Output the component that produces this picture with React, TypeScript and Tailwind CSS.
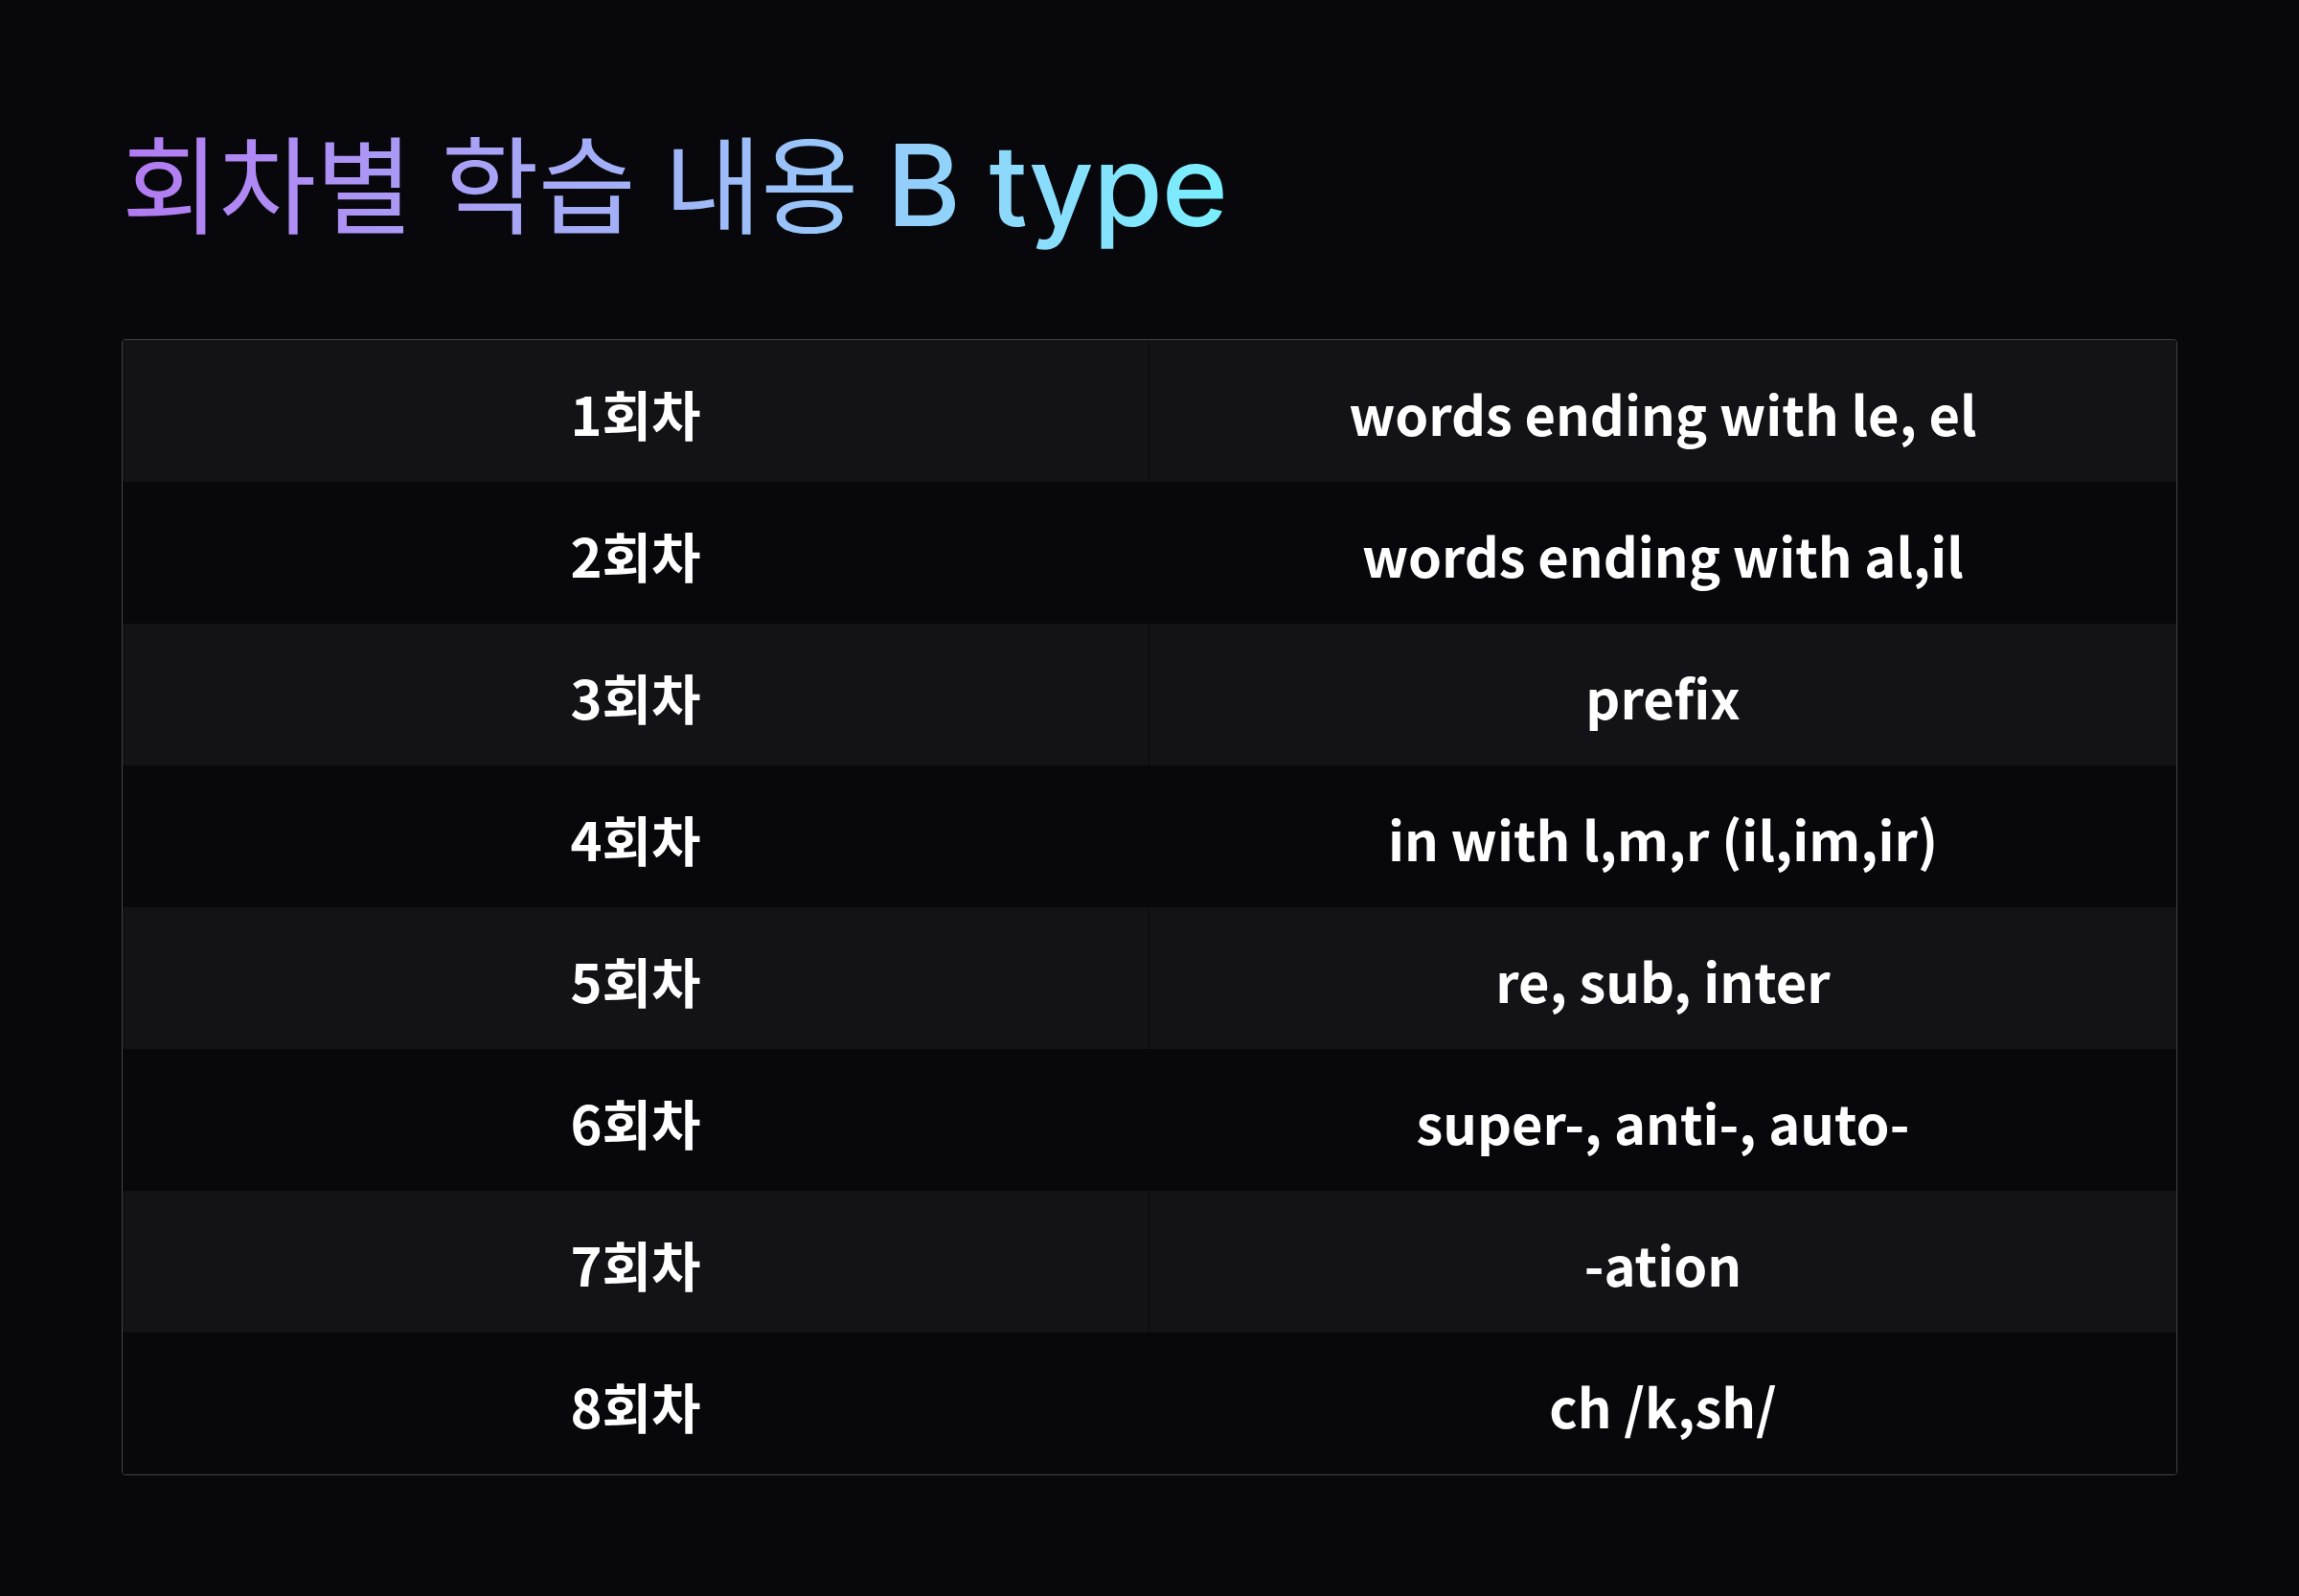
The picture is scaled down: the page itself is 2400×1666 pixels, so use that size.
import React from "react";

const rows = [
  ["1회차", "words ending with le, el"],
  ["2회차", "words ending with al,il"],
  ["3회차", "prefix"],
  ["4회차", "in with l,m,r (il,im,ir)"],
  ["5회차", "re, sub, inter"],
  ["6회차", "super-, anti-, auto-"],
  ["7회차", "-ation"],
  ["8회차", "ch /k,sh/"],
];

export default function App() {
  return (
    <div className="min-h-[1666px] w-full bg-[#08080c] px-[127px] pt-[118px]">
      <h1
        className="flex h-[150px] items-baseline"
        style={{ fontFamily: '"Inter", "Noto Sans CJK KR", sans-serif' }}
      >
        <span className="whitespace-pre bg-gradient-to-r from-[#b27af2] via-[#a0b6f8] to-[#78effd] bg-clip-text leading-[150px] text-transparent">
          <span className="text-[111px] font-normal tracking-[-1px]">회차별 학습 내용 </span>
          <span className="text-[118px] font-medium tracking-[-1px]">B type</span>
        </span>
      </h1>
      <div
        className="mt-[86px] overflow-hidden rounded-[4px] border border-[#404046]"
        style={{ fontFamily: '"Noto Sans CJK KR", sans-serif' }}
      >
        {rows.map(([a, b], i) => (
          <div
            key={i}
            className={`grid h-[148px] grid-cols-2 text-[56px] font-bold text-white ${
              i % 2 === 0 ? "bg-[#121217]" : "bg-[#08080c]"
            }`}
          >
            <div
              className={`flex items-center justify-center border-r pt-[4px] ${
                i % 2 === 0 ? "border-[#0b0b0f]" : "border-[#08080c]"
              }`}
            >
              {a}
            </div>
            <div className="flex items-center justify-center pt-[4px]">{b}</div>
          </div>
        ))}
      </div>
    </div>
  );
}
